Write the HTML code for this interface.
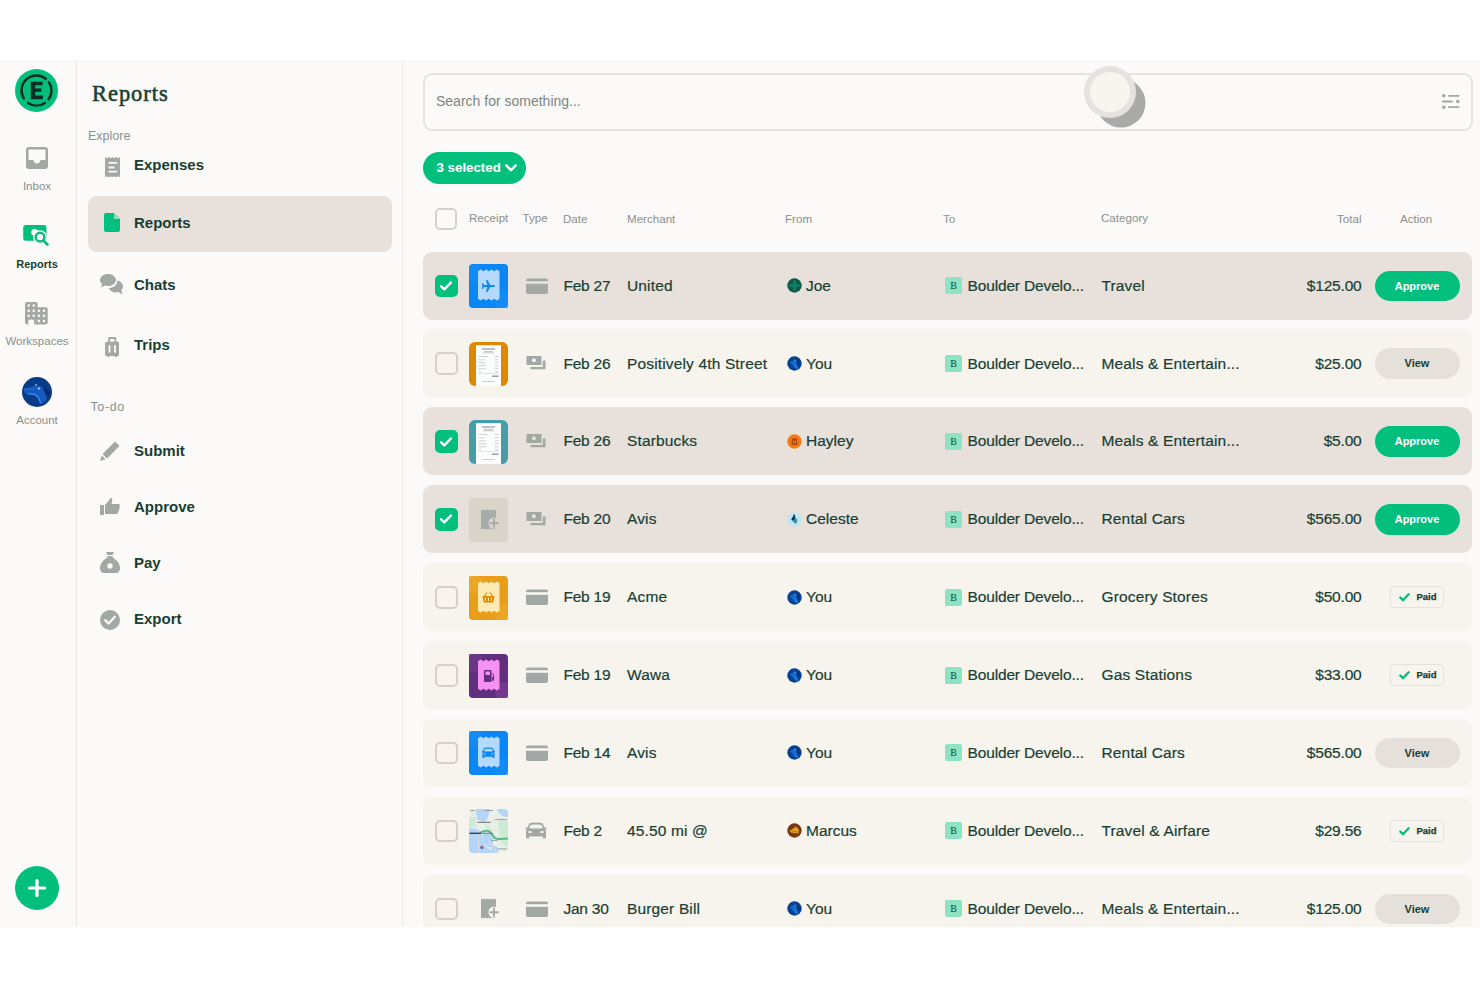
<!DOCTYPE html>
<html><head><meta charset="utf-8">
<style>
*{box-sizing:border-box;margin:0;padding:0}
html,body{width:1480px;height:987px;background:#FFFFFF;overflow:hidden;font-family:"Liberation Sans",sans-serif;color:#183F32}
#app{position:absolute;left:0;top:60px;width:1480px;height:867px;background:#FBFAF8;overflow:hidden}
.abs{position:absolute}
#nav{position:absolute;left:0;top:0;width:77px;height:867px;border-right:1px solid #E8E7E3}
.navlbl{position:absolute;width:74px;left:0;text-align:center;font-size:11.5px;color:#8A918D;white-space:nowrap}
#lhn{position:absolute;left:77px;top:0;width:326px;height:867px;border-right:1px solid #ECEBE8}
.title{position:absolute;left:15px;top:20.5px;font-family:"Liberation Serif",serif;font-size:22.5px;letter-spacing:0.95px;color:#183F32;-webkit-text-stroke:0.55px #183F32}
.sect{position:absolute;font-size:12.5px;color:#8A918D}
.item{position:absolute;left:57px;font-size:15px;font-weight:bold;color:#183F32;white-space:nowrap}
.ico{position:absolute}
.selbg{position:absolute;left:11px;top:135.5px;width:304px;height:56px;border-radius:9px;background:#E8E0DA}
#search{position:absolute;left:423px;top:13px;width:1049.5px;height:57.5px;border:2px solid #E8E3DC;border-radius:9px;background:#FBFAF8}
#search .ph{position:absolute;left:11px;top:18px;font-size:14px;color:#7C8581}
.pill{position:absolute;left:422.5px;top:92px;width:103.5px;height:31.5px;border-radius:16px;background:#03BF7D;color:#fff;font-weight:bold;font-size:13.3px}
.pill span{position:absolute;left:14px;top:7.5px}
.hdr{position:absolute;top:151px;font-size:11.6px;color:#8A918D;white-space:nowrap}
.cb{position:absolute;left:12px;top:23px;width:22.5px;height:22.5px;border:2px solid #D6D0C9;border-radius:5px}
.cb.on{background:#03BF7D;border-color:#03BF7D}
.cb svg{position:absolute;left:2.3px;top:3.3px}
.row{position:absolute;left:423px;width:1049px;height:68px;border-radius:9px}
.thumb{position:absolute;left:46px;top:12.5px;width:39px;height:44px}
.thumb svg{display:block}
.type{position:absolute;left:103px;top:26px}
.type.car{left:102px;top:25px}
.type svg{display:block}
.t{position:absolute;top:25.2px;font-size:15.5px;line-height:18px;white-space:nowrap;color:#183F32;-webkit-text-stroke:0.2px #183F32}
.merch,.cat{letter-spacing:0.15px}
.date{letter-spacing:-0.25px}
.date{left:140.5px}
.merch{left:204px}
.av{position:absolute;left:363.5px;top:26.5px}
.av svg{display:block}
.from{left:383px}
.ws{position:absolute;left:522px;top:25.5px}
.ws svg{display:block}
.to{left:544.5px;letter-spacing:-0.15px}
.cat{left:678.5px}
.total{right:110.5px;text-align:right;letter-spacing:-0.2px}
.btn{position:absolute;left:951.5px;top:19px;width:85px;height:30.5px;border-radius:16px;font-weight:bold;font-size:11px;text-align:center;line-height:30.5px}
.approve{background:#03BF7D;color:#fff}
.view{background:#E6E0DA;color:#183F32}
.paid{position:absolute;left:967px;top:23px;width:53.5px;height:22px;border:1px solid #E6E1DA;border-radius:4px;background:transparent;font-size:9.5px;font-weight:bold;color:#183F32;-webkit-text-stroke:0.25px #183F32}
.paid svg{position:absolute;left:8px;top:6px}
.paid span{position:absolute;left:25.5px;top:4px}
</style></head>
<body>
<div id="app">
  <div id="nav">
    <svg class="abs" style="left:15px;top:8.5px" width="43" height="43" viewBox="0 0 43 43">
      <circle cx="21.5" cy="21.5" r="21.5" fill="#03BF7D"/>
      <path d="M30.73 9.68 A15 15 0 0 0 8.78 29.45" stroke="#0A2E24" stroke-width="2.5" fill="none" stroke-linecap="round"/><path d="M33.64 30.32 A15 15 0 0 0 34.08 13.33" stroke="#0A2E24" stroke-width="2.5" fill="none" stroke-linecap="round"/><path d="M13.11 33.94 A15 15 0 0 0 29.89 33.94" stroke="#0A2E24" stroke-width="2.5" fill="none" stroke-linecap="round"/>
      <path d="M15.8 12.8 H27.6 V16.2 H20.2 V19.6 H26.4 V22.8 H20.2 V26.6 H27.9 V30.2 H15.8 Z" fill="#0A2E24"/>
    </svg>
    <svg class="abs" style="left:26px;top:87px" width="22" height="22" viewBox="0 0 22 22"><path d="M3 0 H19 A3 3 0 0 1 22 3 V19 A3 3 0 0 1 19 22 H3 A3 3 0 0 1 0 19 V3 A3 3 0 0 1 3 0 Z M2.5 2.5 V13 H7.6 A3.4 3.4 0 0 0 14.4 13 H19.5 V2.5 Z" fill="#A2A8A3" fill-rule="evenodd"/></svg>
    <div class="navlbl" style="top:119.5px">Inbox</div>
    <svg class="abs" style="left:23px;top:165px" width="26" height="21" viewBox="0 0 26 21"><rect x="0.2" y="0" width="23.3" height="15.7" rx="2.6" fill="#03BF7D"/><circle cx="17.05" cy="12.1" r="6.9" fill="#FBFAF8"/><circle cx="11.6" cy="7.4" r="3.3" fill="#FBFAF8"/><path d="M23.5 2 V15.7 H12 Z" fill="none"/><circle cx="17.05" cy="12.1" r="4.4" stroke="#03BF7D" stroke-width="2.4" fill="none"/><path d="M20.4 15.5 L24.4 19.5" stroke="#03BF7D" stroke-width="2.7" stroke-linecap="round"/></svg>
    <div class="navlbl" style="top:197.5px;font-weight:bold;color:#183F32;font-size:11px">Reports</div>
    <svg class="abs" style="left:25px;top:242px" width="23" height="23" viewBox="0 0 23 23"><rect x="0" y="0" width="12.6" height="22.6" rx="2" fill="#A2A8A3"/><rect x="10" y="5.2" width="12.7" height="17.4" rx="2" fill="#A2A8A3"/><path d="M3.3 23 V19.2 A1.8 1.8 0 0 1 5.1 17.4 H7.4 A1.8 1.8 0 0 1 9.2 19.2 V23 Z" fill="#FBFAF8"/><g fill="#FBFAF8"><circle cx="3.7" cy="3.5" r="1.25"/><circle cx="8.7" cy="3.5" r="1.25"/><circle cx="3.7" cy="8.7" r="1.25"/><circle cx="8.7" cy="8.7" r="1.25"/><circle cx="13.9" cy="8.7" r="1.25"/><circle cx="19" cy="8.7" r="1.25"/><circle cx="3.7" cy="13.8" r="1.25"/><circle cx="8.7" cy="13.8" r="1.25"/><circle cx="13.9" cy="13.8" r="1.25"/><circle cx="19" cy="13.8" r="1.25"/><circle cx="13.9" cy="19" r="1.25"/><circle cx="19" cy="19" r="1.25"/></g></svg>
    <div class="navlbl" style="top:275px">Workspaces</div>
    <svg class="abs" style="left:22px;top:316.5px" width="30" height="30" viewBox="0 0 30 30"><circle cx="15" cy="15" r="15" fill="#093C88"/><path d="M21 10.5 C24 11 27 14 28.5 18 C27 19 25 19 23 18 Z" fill="#062A66"/><path d="M1.9 12.3 C5 11 9 10 12.4 8.9 L14 7.2 L15.5 8.8 C17.5 9 19.5 9.8 20.9 10.9 C22.5 14 24 18 25 21.4 C23.5 24 21.5 26 19.3 27.1 C17.5 23 15 20 12 18.5 C9 17.5 6 17 3.5 16.5 C2.5 15 2 13.5 1.9 12.3 Z" fill="#1558BE"/><path d="M5.9 17 C9 16.8 12.5 17.2 14.5 18.2 C16.5 19.8 17.8 23 18.5 26.3" stroke="#3490F5" stroke-width="1.3" fill="none"/><path d="M1.9 12.3 C5 11.5 8 11.5 11 12.5" stroke="#2A70D6" stroke-width="1" fill="none"/><ellipse cx="17" cy="11.5" rx="1.4" ry="1.1" fill="#A9CDF6"/><circle cx="14" cy="7.8" r="0.9" fill="#8FBBF0"/><circle cx="11.5" cy="21.5" r="0.4" fill="#3A7FD8"/></svg>
    <div class="navlbl" style="top:353.5px">Account</div>
    <svg class="abs" style="left:15px;top:806px" width="44" height="44" viewBox="0 0 44 44"><circle cx="22" cy="22" r="22" fill="#03BF7D"/><path d="M22 14.5 V29.5 M14.5 22 H29.5" stroke="#fff" stroke-width="3.2" stroke-linecap="round"/></svg>
  </div>
  <div id="lhn">
    <div class="title">Reports</div>
    <div class="sect" style="left:11px;top:68.5px">Explore</div>
    <svg class="ico" style="left:27.6px;top:96.5px" width="15" height="20.5" viewBox="0 0 15 20.5"><path d="M0 0 L1.9 1.3 L3.75 0 L5.6 1.3 L7.5 0 L9.4 1.3 L11.25 0 L13.1 1.3 L15 0 V20.5 L13.1 19.2 L11.25 20.5 L9.4 19.2 L7.5 20.5 L5.6 19.2 L3.75 20.5 L1.9 19.2 L0 20.5 Z" fill="#A2A8A3"/><rect x="3.4" y="4.9" width="8.8" height="1.9" rx=".9" fill="#FBFAF8"/><rect x="3.4" y="9.5" width="6.2" height="1.9" rx=".9" fill="#FBFAF8"/><rect x="3.4" y="13.7" width="8.8" height="1.9" rx=".9" fill="#FBFAF8"/></svg>
    <div class="item" style="top:96px">Expenses</div>
    <div class="selbg"></div>
    <svg class="ico" style="left:26.5px;top:153px" width="16" height="19" viewBox="0 0 16 19"><path d="M2 0 H10 L16 6 V17 A2 2 0 0 1 14 19 H2 A2 2 0 0 1 0 17 V2 A2 2 0 0 1 2 0 Z" fill="#03BF7D"/><path d="M10 0 V6 H16" fill="#7FE5BB"/></svg>
    <div class="item" style="top:153.5px">Reports</div>
    <svg class="ico" style="left:22.5px;top:214px" width="23" height="21" viewBox="0 0 23 21"><path d="M8 0 C12.4 0 16 2.7 16 6 C16 9.3 12.4 12 8 12 C7 12 6 11.9 5.2 11.6 L1 13.5 L2.2 10 C0.8 9 0 7.6 0 6 C0 2.7 3.6 0 8 0 Z" fill="#A2A8A3"/><path d="M17.5 6.5 C20.6 7.3 23 9.6 23 12.3 C23 13.7 22.4 15 21.3 16 L22.5 20.5 L18.3 18.1 C17.6 18.3 16.8 18.4 16 18.4 C12.6 18.4 9.7 16.7 8.7 14.2 C13.4 14 17.3 11 17.5 6.5 Z" fill="#A2A8A3"/></svg>
    <div class="item" style="top:216px">Chats</div>
    <svg class="ico" style="left:27.5px;top:276.5px" width="14.5" height="20" viewBox="0 0 16 21" preserveAspectRatio="none"><path d="M5 0 H11 A1.5 1.5 0 0 1 12.5 1.5 V5 H14 A2 2 0 0 1 16 7 V18 A2 2 0 0 1 14 20 H13.5 V21 H11 V20 H5 V21 H2.5 V20 H2 A2 2 0 0 1 0 18 V7 A2 2 0 0 1 2 5 H3.5 V1.5 A1.5 1.5 0 0 1 5 0 Z M5.5 2 V5 H10.5 V2 Z" fill="#A2A8A3" fill-rule="evenodd"/><rect x="4" y="8.5" width="2" height="8" fill="#FBFAF8"/><rect x="10" y="8.5" width="2" height="8" fill="#FBFAF8"/></svg>
    <div class="item" style="top:276px">Trips</div>
    <div class="sect" style="left:13.5px;top:339.5px;letter-spacing:0.6px">To-do</div>
    <svg class="ico" style="left:23px;top:380.5px" width="20" height="20" viewBox="0 0 20 20"><path d="M15 0.5 L19.5 5 L7 17.5 L2.5 13 Z" fill="#A2A8A3"/><path d="M1.8 14.5 L5.5 18.2 L0 20 Z" fill="#A2A8A3"/></svg>
    <div class="item" style="top:382px">Submit</div>
    <svg class="ico" style="left:23px;top:437.5px" width="20" height="17" viewBox="0 0 20 17"><path d="M0 7 H4 V17 H0 Z" fill="#A2A8A3"/><path d="M5 7 L9 2.5 C9.5 1 10 0 11 0 C12.5 0 12.5 2 12 4 L11.5 6 H18.5 C19.5 6 20 6.8 20 7.5 C20 8.2 19.5 8.8 19 9 C19.6 9.3 19.8 9.8 19.7 10.4 C19.6 11 19.2 11.4 18.7 11.5 C19.1 11.9 19.2 12.4 19 12.9 C18.8 13.4 18.4 13.7 17.9 13.8 C18.1 14.2 18.1 14.7 17.8 15.1 C17.5 15.6 17 16 16.3 16 H5 Z" fill="#A2A8A3"/></svg>
    <div class="item" style="top:438px">Approve</div>
    <svg class="ico" style="left:23px;top:491.5px" width="20" height="21" viewBox="0 0 20 21"><path d="M6 0 H14 L12.5 3 H7.5 Z" fill="#A2A8A3"/><path d="M7.5 4 H12.5 L13 6 C17 8 20 12 20 16 C20 19 18.5 21 16 21 H4 C1.5 21 0 19 0 16 C0 12 3 8 7 6 Z" fill="#A2A8A3"/><circle cx="10" cy="14" r="2.7" fill="#FBFAF8"/></svg>
    <div class="item" style="top:494px">Pay</div>
    <svg class="ico" style="left:23px;top:549.5px" width="20" height="20" viewBox="0 0 20 20"><circle cx="10" cy="10" r="10" fill="#A2A8A3"/><path d="M5.3 10.3 L8.6 13.5 L14.8 6.8" stroke="#FBFAF8" stroke-width="2.4" fill="none" stroke-linecap="round" stroke-linejoin="round"/></svg>
    <div class="item" style="top:550px">Export</div>
  </div>
  <div id="search"><div class="ph">Search for something...</div>
    <svg class="abs" style="left:1017px;top:18.5px" width="18" height="15" viewBox="0 0 18 15"><circle cx="1.8" cy="1.8" r="1.8" fill="#A2A8A3"/><rect x="6" y="0.9" width="11.5" height="1.8" rx=".9" fill="#A2A8A3"/><rect x="0" y="6.6" width="11" height="1.8" rx=".9" fill="#A2A8A3"/><circle cx="15.8" cy="7.5" r="1.8" fill="#A2A8A3"/><circle cx="1.8" cy="13.2" r="1.8" fill="#A2A8A3"/><rect x="6" y="12.3" width="11.5" height="1.8" rx=".9" fill="#A2A8A3"/></svg>
  </div>
  <svg class="abs" style="left:1080px;top:0px" width="70" height="70" viewBox="0 0 70 70"><circle cx="41" cy="43" r="24.5" fill="#AAAAA8"/><circle cx="30" cy="32" r="26" fill="#E6E3DF"/><circle cx="30" cy="32" r="20" fill="#F8F5F1"/></svg>
  <div class="pill"><span>3 selected</span><svg class="abs" style="left:82px;top:12px" width="12" height="8" viewBox="0 0 12 8"><path d="M1.3 1.3 L6 6.2 L10.7 1.3" stroke="#fff" stroke-width="2.4" fill="none" stroke-linecap="round" stroke-linejoin="round"/></svg></div>
  <div class="cb" style="left:434.5px;top:147.5px"></div>
  <div class="hdr" style="left:469px">Receipt</div>
  <div class="hdr" style="left:522.5px">Type</div>
  <div class="hdr" style="left:563px;top:152px">Date</div>
  <div class="hdr" style="left:627px;top:152px">Merchant</div>
  <div class="hdr" style="left:785px;top:152px">From</div>
  <div class="hdr" style="left:943px;top:152px">To</div>
  <div class="hdr" style="left:1101px">Category</div>
  <div class="hdr" style="left:1337px;top:152px">Total</div>
  <div class="hdr" style="left:1400px;top:152px">Action</div>
  <div class="row" style="top:191.5px;background:#E8E0DA">
  <div class="cb on"><svg width="14" height="12" viewBox="0 0 14 12"><path d="M2 6.2 L5.3 9.3 L12 2.5" stroke="#fff" stroke-width="2.4" fill="none" stroke-linecap="round" stroke-linejoin="round"/></svg></div>
  <div class="thumb"><svg width="39" height="44" viewBox="0 0 39 44"><rect width="39" height="44" rx="4" fill="#0B86F5"/><circle cx="6" cy="10" r="9" fill="#1790F7" opacity=".6"/><circle cx="33" cy="36" r="10" fill="#1790F7" opacity=".6"/><path d="M9.00 7.30 L11.69 5.50 L14.38 7.30 L17.06 5.50 L19.75 7.30 L22.44 5.50 L25.12 7.30 L27.81 5.50 L30.50 7.30 L30.50 34.70 L27.81 36.50 L25.12 34.70 L22.44 36.50 L19.75 34.70 L17.06 36.50 L14.38 34.70 L11.69 36.50 L9.00 34.70 Z" fill="#B4D9FD"/><path d="M19.5 15.5 C20.3 15.5 20.6 16.4 20.6 17.5 V20.3 L25.5 23 V24.6 L20.6 23.1 V26.4 L22.2 27.6 V28.8 L19.5 28 L16.8 28.8 V27.6 L18.4 26.4 V23.1 L13.5 24.6 V23 L18.4 20.3 V17.5 C18.4 16.4 18.7 15.5 19.5 15.5 Z" fill="#0B86F5" transform="rotate(90 19.5 22)"/></svg></div>
  <div class="type"><svg width="22" height="16" viewBox="0 0 22 16"><rect x="0" y="0.5" width="22" height="15.5" rx="2" fill="#A2A8A3"/><rect x="0" y="3.2" width="22" height="2.6" fill="#E8E0DA"/></svg></div>
  <div class="t date">Feb 27</div>
  <div class="t merch">United</div>
  <div class="av"><svg width="15" height="15" viewBox="0 0 15 15"><circle cx="7.5" cy="7.5" r="7.2" fill="#0B5A46"/><path d="M7.5 2.5 V12.5 M2.5 7.5 H12.5" stroke="#188066" stroke-width="2.6"/></svg></div>
  <div class="t from">Joe</div>
  <div class="ws"><svg width="17" height="17" viewBox="0 0 17 17"><rect width="17" height="17" rx="2" fill="#8EE3C4"/><text x="8.5" y="12.3" font-family="Liberation Serif" font-size="10" text-anchor="middle" fill="#0B4A38">B</text></svg></div>
  <div class="t to">Boulder Develo...</div>
  <div class="t cat">Travel</div>
  <div class="t total">$125.00</div>
  <div class="btn approve">Approve</div>
</div><div class="row" style="top:269.4px;background:#F7F4EE">
  <div class="cb"></div>
  <div class="thumb"><svg width="39" height="44" viewBox="0 0 39 44"><rect width="39" height="44" rx="6" fill="#E08700"/><rect x="7" y="3.2" width="25" height="40.8" fill="#FBFCFC"/><rect x="13" y="6.5" width="13" height="1" fill="#7F868C"/><rect x="15" y="9" width="9" height="0.7" fill="#A9AFB3"/><rect x="14" y="10.5" width="11" height="0.7" fill="#A9AFB3"/><rect x="9.5" y="14" width="9" height="0.7" fill="#B8BEC2"/><rect x="9.5" y="17.5" width="6" height="0.7" fill="#B8BEC2"/><rect x="9.5" y="20.5" width="7" height="0.7" fill="#B8BEC2"/><rect x="9.5" y="23.5" width="8" height="0.7" fill="#B8BEC2"/><rect x="9.5" y="26.5" width="7.5" height="0.7" fill="#B8BEC2"/><rect x="9.5" y="29.5" width="3" height="0.7" fill="#B8BEC2"/><rect x="26" y="14" width="3.5" height="0.7" fill="#B8BEC2"/><rect x="26" y="17.5" width="3.5" height="0.7" fill="#B8BEC2"/><rect x="26" y="20.5" width="3.5" height="0.7" fill="#B8BEC2"/><rect x="26" y="23.5" width="3.5" height="0.7" fill="#B8BEC2"/><rect x="26" y="26.5" width="3.5" height="0.7" fill="#B8BEC2"/><rect x="26" y="29.5" width="3.5" height="0.7" fill="#B8BEC2"/><rect x="9.5" y="31.3" width="20" height="0.6" fill="#D0D4D6"/><rect x="23" y="33.5" width="6.5" height="1.4" fill="#8D9398"/><rect x="13" y="39" width="13" height="0.7" fill="#B8BEC2"/></svg></div>
  <div class="type"><svg width="21" height="15" viewBox="0 0 21 15" style="margin-top:1px"><rect x="0.5" y="0" width="15" height="9" fill="#A2A8A3"/><circle cx="7.9" cy="4.3" r="2" fill="#F7F4EE"/><path d="M16.8 4.5 H19.5 V13.2 H4.5 V11 H16.8 Z" fill="#A2A8A3"/></svg></div>
  <div class="t date">Feb 26</div>
  <div class="t merch">Positively 4th Street</div>
  <div class="av"><svg width="15" height="15" viewBox="0 0 15 15"><circle cx="7.5" cy="7.5" r="7.2" fill="#08418F"/><path d="M2.5 6 C5 5.5 6.5 4.5 7.5 3 L9 4.5 L10 9 L11.5 12 C9.5 13.5 7 12 6 10 C5 8 3.5 7 2.5 6 Z" fill="#1467D0"/><path d="M7.5 7 L9.5 11 L11 12.5 C10 13 9 12.5 8.5 11.5 Z" fill="#2C86F0"/><circle cx="8.2" cy="4.8" r="0.8" fill="#5C9CE8"/><path d="M12 4 C11 6 11.5 8 13 9" stroke="#072E6B" stroke-width="1.2" fill="none"/></svg></div>
  <div class="t from">You</div>
  <div class="ws"><svg width="17" height="17" viewBox="0 0 17 17"><rect width="17" height="17" rx="2" fill="#8EE3C4"/><text x="8.5" y="12.3" font-family="Liberation Serif" font-size="10" text-anchor="middle" fill="#0B4A38">B</text></svg></div>
  <div class="t to">Boulder Develo...</div>
  <div class="t cat">Meals &amp; Entertain...</div>
  <div class="t total">$25.00</div>
  <div class="btn view">View</div>
</div><div class="row" style="top:347.3px;background:#E8E0DA">
  <div class="cb on"><svg width="14" height="12" viewBox="0 0 14 12"><path d="M2 6.2 L5.3 9.3 L12 2.5" stroke="#fff" stroke-width="2.4" fill="none" stroke-linecap="round" stroke-linejoin="round"/></svg></div>
  <div class="thumb"><svg width="39" height="44" viewBox="0 0 39 44"><rect width="39" height="44" rx="6" fill="#449DA8"/><rect x="7" y="3.2" width="25" height="40.8" fill="#FBFCFC"/><rect x="13" y="6.5" width="13" height="1" fill="#7F868C"/><rect x="15" y="9" width="9" height="0.7" fill="#A9AFB3"/><rect x="14" y="10.5" width="11" height="0.7" fill="#A9AFB3"/><rect x="9.5" y="14" width="9" height="0.7" fill="#B8BEC2"/><rect x="9.5" y="17.5" width="6" height="0.7" fill="#B8BEC2"/><rect x="9.5" y="20.5" width="7" height="0.7" fill="#B8BEC2"/><rect x="9.5" y="23.5" width="8" height="0.7" fill="#B8BEC2"/><rect x="9.5" y="26.5" width="7.5" height="0.7" fill="#B8BEC2"/><rect x="9.5" y="29.5" width="3" height="0.7" fill="#B8BEC2"/><rect x="26" y="14" width="3.5" height="0.7" fill="#B8BEC2"/><rect x="26" y="17.5" width="3.5" height="0.7" fill="#B8BEC2"/><rect x="26" y="20.5" width="3.5" height="0.7" fill="#B8BEC2"/><rect x="26" y="23.5" width="3.5" height="0.7" fill="#B8BEC2"/><rect x="26" y="26.5" width="3.5" height="0.7" fill="#B8BEC2"/><rect x="26" y="29.5" width="3.5" height="0.7" fill="#B8BEC2"/><rect x="9.5" y="31.3" width="20" height="0.6" fill="#D0D4D6"/><rect x="23" y="33.5" width="6.5" height="1.4" fill="#8D9398"/><rect x="13" y="39" width="13" height="0.7" fill="#B8BEC2"/></svg></div>
  <div class="type"><svg width="21" height="15" viewBox="0 0 21 15" style="margin-top:1px"><rect x="0.5" y="0" width="15" height="9" fill="#A2A8A3"/><circle cx="7.9" cy="4.3" r="2" fill="#E8E0DA"/><path d="M16.8 4.5 H19.5 V13.2 H4.5 V11 H16.8 Z" fill="#A2A8A3"/></svg></div>
  <div class="t date">Feb 26</div>
  <div class="t merch">Starbucks</div>
  <div class="av"><svg width="15" height="15" viewBox="0 0 15 15"><circle cx="7.5" cy="7.5" r="7.2" fill="#F37A12"/><path d="M5 5 C5 4 10 4 10 5 L10.5 10.5 C9 11.5 6 11.5 4.5 10.5 Z" fill="#A8480C"/><rect x="6" y="6.5" width="1.2" height="3" fill="#E07840"/><rect x="8" y="6.5" width="1.2" height="3" fill="#E07840"/></svg></div>
  <div class="t from">Hayley</div>
  <div class="ws"><svg width="17" height="17" viewBox="0 0 17 17"><rect width="17" height="17" rx="2" fill="#8EE3C4"/><text x="8.5" y="12.3" font-family="Liberation Serif" font-size="10" text-anchor="middle" fill="#0B4A38">B</text></svg></div>
  <div class="t to">Boulder Develo...</div>
  <div class="t cat">Meals &amp; Entertain...</div>
  <div class="t total">$5.00</div>
  <div class="btn approve">Approve</div>
</div><div class="row" style="top:425.2px;background:#E8E0DA">
  <div class="cb on"><svg width="14" height="12" viewBox="0 0 14 12"><path d="M2 6.2 L5.3 9.3 L12 2.5" stroke="#fff" stroke-width="2.4" fill="none" stroke-linecap="round" stroke-linejoin="round"/></svg></div>
  <div class="thumb"><svg width="39" height="44" viewBox="0 0 39 44"><rect width="39" height="44" rx="4" fill="#DBD4CB"/><path d="M12.00 11.50 L13.50 12.50 L15.00 11.50 L16.50 12.50 L18.00 11.50 L19.50 12.50 L21.00 11.50 L22.50 12.50 L24.00 11.50 L25.50 12.50 L27.00 11.50 L27.00 31.50 L25.50 30.50 L24.00 31.50 L22.50 30.50 L21.00 31.50 L19.50 30.50 L18.00 31.50 L16.50 30.50 L15.00 31.50 L13.50 30.50 L12.00 31.50 Z" fill="#A6ACA6"/><circle cx="25" cy="25.2" r="5.6" fill="#DBD4CB"/><path d="M25 20.6 V29.799999999999997 M20.4 25.2 H29.6" stroke="#A6ACA6" stroke-width="1.9"/></svg></div>
  <div class="type"><svg width="21" height="15" viewBox="0 0 21 15" style="margin-top:1px"><rect x="0.5" y="0" width="15" height="9" fill="#A2A8A3"/><circle cx="7.9" cy="4.3" r="2" fill="#E8E0DA"/><path d="M16.8 4.5 H19.5 V13.2 H4.5 V11 H16.8 Z" fill="#A2A8A3"/></svg></div>
  <div class="t date">Feb 20</div>
  <div class="t merch">Avis</div>
  <div class="av"><svg width="15" height="15" viewBox="0 0 15 15"><circle cx="7.5" cy="7.5" r="7.2" fill="#BFE6F4"/><path d="M6.5 2.5 C8 2.5 8.5 4 8 5 L10.5 8 L9 12 L7 10.5 L4.5 8 C4.5 6 5.5 5 6.5 4.5 Z" fill="#3C8C9C"/><path d="M6.5 2.5 C8 2.5 8.5 4 8 5 L7 8 L4.5 8 C4.5 6 5.5 5 6.5 4.5 Z" fill="#0A2F4C"/></svg></div>
  <div class="t from">Celeste</div>
  <div class="ws"><svg width="17" height="17" viewBox="0 0 17 17"><rect width="17" height="17" rx="2" fill="#8EE3C4"/><text x="8.5" y="12.3" font-family="Liberation Serif" font-size="10" text-anchor="middle" fill="#0B4A38">B</text></svg></div>
  <div class="t to">Boulder Develo...</div>
  <div class="t cat">Rental Cars</div>
  <div class="t total">$565.00</div>
  <div class="btn approve">Approve</div>
</div><div class="row" style="top:503.1px;background:#F7F4EE">
  <div class="cb"></div>
  <div class="thumb"><svg width="39" height="44" viewBox="0 0 39 44"><rect width="39" height="44" rx="4" fill="#E89E1A"/><circle cx="4" cy="8" r="10" fill="#EFAA2A" opacity=".7"/><circle cx="36" cy="38" r="10" fill="#EFAA2A" opacity=".7"/><path d="M9.00 7.30 L11.69 5.50 L14.38 7.30 L17.06 5.50 L19.75 7.30 L22.44 5.50 L25.12 7.30 L27.81 5.50 L30.50 7.30 L30.50 34.70 L27.81 36.50 L25.12 34.70 L22.44 36.50 L19.75 34.70 L17.06 36.50 L14.38 34.70 L11.69 36.50 L9.00 34.70 Z" fill="#FCE9B4"/><path d="M13.5 20 H25.5 L24.3 26.5 H14.7 Z" fill="#E08A00"/><path d="M15.5 20 L18 16.5 M23.5 20 L21 16.5" stroke="#E08A00" stroke-width="1.2"/><rect x="16" y="21.5" width="1" height="3.5" fill="#FCE9B4"/><rect x="19" y="21.5" width="1" height="3.5" fill="#FCE9B4"/><rect x="22" y="21.5" width="1" height="3.5" fill="#FCE9B4"/></svg></div>
  <div class="type"><svg width="22" height="16" viewBox="0 0 22 16"><rect x="0" y="0.5" width="22" height="15.5" rx="2" fill="#A2A8A3"/><rect x="0" y="3.2" width="22" height="2.6" fill="#F7F4EE"/></svg></div>
  <div class="t date">Feb 19</div>
  <div class="t merch">Acme</div>
  <div class="av"><svg width="15" height="15" viewBox="0 0 15 15"><circle cx="7.5" cy="7.5" r="7.2" fill="#08418F"/><path d="M2.5 6 C5 5.5 6.5 4.5 7.5 3 L9 4.5 L10 9 L11.5 12 C9.5 13.5 7 12 6 10 C5 8 3.5 7 2.5 6 Z" fill="#1467D0"/><path d="M7.5 7 L9.5 11 L11 12.5 C10 13 9 12.5 8.5 11.5 Z" fill="#2C86F0"/><circle cx="8.2" cy="4.8" r="0.8" fill="#5C9CE8"/><path d="M12 4 C11 6 11.5 8 13 9" stroke="#072E6B" stroke-width="1.2" fill="none"/></svg></div>
  <div class="t from">You</div>
  <div class="ws"><svg width="17" height="17" viewBox="0 0 17 17"><rect width="17" height="17" rx="2" fill="#8EE3C4"/><text x="8.5" y="12.3" font-family="Liberation Serif" font-size="10" text-anchor="middle" fill="#0B4A38">B</text></svg></div>
  <div class="t to">Boulder Develo...</div>
  <div class="t cat">Grocery Stores</div>
  <div class="t total">$50.00</div>
  <div class="paid"><svg width="11" height="9" viewBox="0 0 11 9"><path d="M1.3 4.5 L4 7.3 L9.6 1.3" stroke="#03BF7D" stroke-width="2.3" fill="none" stroke-linecap="round" stroke-linejoin="round"/></svg><span>Paid</span></div>
</div><div class="row" style="top:581.0px;background:#F7F4EE">
  <div class="cb"></div>
  <div class="thumb"><svg width="39" height="44" viewBox="0 0 39 44"><rect width="39" height="44" rx="4" fill="#622F7E"/><circle cx="4" cy="8" r="10" fill="#70398C" opacity=".7"/><circle cx="36" cy="38" r="10" fill="#7A3D96" opacity=".7"/><path d="M9.00 7.30 L11.69 5.50 L14.38 7.30 L17.06 5.50 L19.75 7.30 L22.44 5.50 L25.12 7.30 L27.81 5.50 L30.50 7.30 L30.50 34.70 L27.81 36.50 L25.12 34.70 L22.44 36.50 L19.75 34.70 L17.06 36.50 L14.38 34.70 L11.69 36.50 L9.00 34.70 Z" fill="#F691F2"/><rect x="15" y="16" width="7.5" height="12" rx="1" fill="#622F7E"/><rect x="16.5" y="17.5" width="4.5" height="3.5" fill="#F691F2"/><path d="M22.5 19 L24.5 21 V26 C24.5 27 23.5 27 23.5 26 V23.5 H22.5" stroke="#622F7E" stroke-width="1" fill="none"/></svg></div>
  <div class="type"><svg width="22" height="16" viewBox="0 0 22 16"><rect x="0" y="0.5" width="22" height="15.5" rx="2" fill="#A2A8A3"/><rect x="0" y="3.2" width="22" height="2.6" fill="#F7F4EE"/></svg></div>
  <div class="t date">Feb 19</div>
  <div class="t merch">Wawa</div>
  <div class="av"><svg width="15" height="15" viewBox="0 0 15 15"><circle cx="7.5" cy="7.5" r="7.2" fill="#08418F"/><path d="M2.5 6 C5 5.5 6.5 4.5 7.5 3 L9 4.5 L10 9 L11.5 12 C9.5 13.5 7 12 6 10 C5 8 3.5 7 2.5 6 Z" fill="#1467D0"/><path d="M7.5 7 L9.5 11 L11 12.5 C10 13 9 12.5 8.5 11.5 Z" fill="#2C86F0"/><circle cx="8.2" cy="4.8" r="0.8" fill="#5C9CE8"/><path d="M12 4 C11 6 11.5 8 13 9" stroke="#072E6B" stroke-width="1.2" fill="none"/></svg></div>
  <div class="t from">You</div>
  <div class="ws"><svg width="17" height="17" viewBox="0 0 17 17"><rect width="17" height="17" rx="2" fill="#8EE3C4"/><text x="8.5" y="12.3" font-family="Liberation Serif" font-size="10" text-anchor="middle" fill="#0B4A38">B</text></svg></div>
  <div class="t to">Boulder Develo...</div>
  <div class="t cat">Gas Stations</div>
  <div class="t total">$33.00</div>
  <div class="paid"><svg width="11" height="9" viewBox="0 0 11 9"><path d="M1.3 4.5 L4 7.3 L9.6 1.3" stroke="#03BF7D" stroke-width="2.3" fill="none" stroke-linecap="round" stroke-linejoin="round"/></svg><span>Paid</span></div>
</div><div class="row" style="top:658.9px;background:#F7F4EE">
  <div class="cb"></div>
  <div class="thumb"><svg width="39" height="44" viewBox="0 0 39 44"><rect width="39" height="44" rx="4" fill="#0B86F5"/><circle cx="4" cy="8" r="10" fill="#1790F7" opacity=".6"/><circle cx="36" cy="38" r="10" fill="#1790F7" opacity=".6"/><path d="M9.00 7.30 L11.69 5.50 L14.38 7.30 L17.06 5.50 L19.75 7.30 L22.44 5.50 L25.12 7.30 L27.81 5.50 L30.50 7.30 L30.50 34.70 L27.81 36.50 L25.12 34.70 L22.44 36.50 L19.75 34.70 L17.06 36.50 L14.38 34.70 L11.69 36.50 L9.00 34.70 Z" fill="#B4D9FD"/><path d="M15.2 17 C16 16.2 23 16.2 23.8 17 L25 19.8 H26 V20.8 L25.3 21 L25.6 23.5 V27 H23.6 V25.8 H15.4 V27 H13.4 V23.5 L13.7 21 L13 20.8 V19.8 H14 Z" fill="#0B86F5"/><path d="M16 18 C17 17.5 22 17.5 23 18 L24 20.2 C21 20.7 18 20.7 15 20.2 Z" fill="#B4D9FD"/><ellipse cx="15.8" cy="22.8" rx="1.1" ry="0.6" fill="#B4D9FD"/><ellipse cx="23.2" cy="22.8" rx="1.1" ry="0.6" fill="#B4D9FD"/></svg></div>
  <div class="type"><svg width="22" height="16" viewBox="0 0 22 16"><rect x="0" y="0.5" width="22" height="15.5" rx="2" fill="#A2A8A3"/><rect x="0" y="3.2" width="22" height="2.6" fill="#F7F4EE"/></svg></div>
  <div class="t date">Feb 14</div>
  <div class="t merch">Avis</div>
  <div class="av"><svg width="15" height="15" viewBox="0 0 15 15"><circle cx="7.5" cy="7.5" r="7.2" fill="#08418F"/><path d="M2.5 6 C5 5.5 6.5 4.5 7.5 3 L9 4.5 L10 9 L11.5 12 C9.5 13.5 7 12 6 10 C5 8 3.5 7 2.5 6 Z" fill="#1467D0"/><path d="M7.5 7 L9.5 11 L11 12.5 C10 13 9 12.5 8.5 11.5 Z" fill="#2C86F0"/><circle cx="8.2" cy="4.8" r="0.8" fill="#5C9CE8"/><path d="M12 4 C11 6 11.5 8 13 9" stroke="#072E6B" stroke-width="1.2" fill="none"/></svg></div>
  <div class="t from">You</div>
  <div class="ws"><svg width="17" height="17" viewBox="0 0 17 17"><rect width="17" height="17" rx="2" fill="#8EE3C4"/><text x="8.5" y="12.3" font-family="Liberation Serif" font-size="10" text-anchor="middle" fill="#0B4A38">B</text></svg></div>
  <div class="t to">Boulder Develo...</div>
  <div class="t cat">Rental Cars</div>
  <div class="t total">$565.00</div>
  <div class="btn view">View</div>
</div><div class="row" style="top:736.8px;background:#F7F4EE">
  <div class="cb"></div>
  <div class="thumb"><svg width="39" height="44" viewBox="0 0 39 44"><defs><clipPath id="mc"><rect width="39" height="44" rx="4"/></clipPath></defs><g clip-path="url(#mc)"><rect width="39" height="44" fill="#E6F1E8"/><path d="M0 8 H7.5 L6 18 H0 Z" fill="#CBEBD6"/><path d="M29 12 C33 11 37 12 39 13 V38 C36 37 33 35 31 30 C30 24 29.5 18 29 12 Z" fill="#CBEBD6"/><path d="M15 14 C18 15 22 18 24 21 C22 22 19 21 16 20 Z" fill="#D3EEDC"/><path d="M7 0 H21 C20 5 19 9 17 11.5 C15 13 11 12.5 9 11 C7.5 8 7 4 7 0 Z" fill="#B3D6F8"/><path d="M28 0 H39 V8 C35 8.5 30 6 28 0 Z" fill="#B3D6F8"/><path d="M0 19.5 C3 19 8 19.5 12.5 22 C13 28 14 34 18 38 C21 41 25 42 28 44 H0 Z" fill="#B3D6F8"/><path d="M13 23.5 C17 23 21 24 23.5 27 C24.5 31 24 36 22.5 39 C19 38 16 36 14.5 33 Z" fill="#B3D6F8"/><path d="M23 37 C25 36 27 37 29 39 V44 H22 Z" fill="#B3D6F8"/><path d="M3 2 L7 14 L9 22 L10 44 M9 11 L20 14 L30 9 L39 10 M20 22 L39 20 M18 30 L28 44 M24 25 L33 36" stroke="#F3D9D2" stroke-width="0.8" fill="none"/><path d="M12.8 23 C15 22 17.5 21.3 19.5 22 C22 23 23.5 26.5 25.5 28.8 C28 30.5 32 30.2 39 29.5" stroke="#5BB97F" stroke-width="2.1" fill="none" stroke-linecap="round"/><rect x="1" y="1" width="5" height="0.8" fill="#8A8F94"/><rect x="16" y="1" width="8" height="0.8" fill="#8A8F94"/><rect x="8.5" y="12.8" width="13" height="0.9" fill="#5B6066"/><rect x="26" y="10.3" width="12" height="0.8" fill="#8A8F94"/><rect x="0.5" y="23.6" width="12" height="1.4" fill="#3D4247"/><rect x="14" y="23.8" width="10" height="0.9" fill="#6B7075"/><rect x="28.5" y="39.5" width="9.5" height="0.8" fill="#8A8F94"/><rect x="22" y="31" width="7" height="0.7" fill="#8A8F94"/><circle cx="12.8" cy="38.5" r="1.6" fill="#5461C9"/><circle cx="12.8" cy="37.6" r="1" fill="#E25546"/></g></svg></div>
  <div class="type car"><svg width="22" height="17" viewBox="0 0 22 17"><path d="M4.5 1.2 C6 0.3 16 0.3 17.5 1.2 L19.5 5.5 L21.5 5.5 L21.5 7 L20.5 7.2 L21 11 L21 16.5 L18 16.5 L18 14.5 L4 14.5 L4 16.5 L1 16.5 L1 11 L1.5 7.2 L0.5 7 L0.5 5.5 L2.5 5.5 Z" fill="#A2A8A3"/><path d="M5.5 3 C7 2.3 15 2.3 16.5 3 L18 6 C14 6.8 8 6.8 4 6 Z" fill="#F7F4EE"/><ellipse cx="5" cy="10" rx="2" ry="1" fill="#F7F4EE"/><ellipse cx="17" cy="10" rx="2" ry="1" fill="#F7F4EE"/></svg></div>
  <div class="t date">Feb 2</div>
  <div class="t merch">45.50 mi @</div>
  <div class="av"><svg width="15" height="15" viewBox="0 0 15 15"><circle cx="7.5" cy="7.5" r="7.2" fill="#7A3810"/><path d="M2.5 7.5 L5 6.5 L9 3.5 L12 7 L11.5 10.5 L7 10 L4 9.5 Z" fill="#E0A21C"/><path d="M4 8 L8 8.5 L11 9" stroke="#B87812" stroke-width="0.8"/></svg></div>
  <div class="t from">Marcus</div>
  <div class="ws"><svg width="17" height="17" viewBox="0 0 17 17"><rect width="17" height="17" rx="2" fill="#8EE3C4"/><text x="8.5" y="12.3" font-family="Liberation Serif" font-size="10" text-anchor="middle" fill="#0B4A38">B</text></svg></div>
  <div class="t to">Boulder Develo...</div>
  <div class="t cat">Travel &amp; Airfare</div>
  <div class="t total">$29.56</div>
  <div class="paid"><svg width="11" height="9" viewBox="0 0 11 9"><path d="M1.3 4.5 L4 7.3 L9.6 1.3" stroke="#03BF7D" stroke-width="2.3" fill="none" stroke-linecap="round" stroke-linejoin="round"/></svg><span>Paid</span></div>
</div><div class="row" style="top:814.7px;background:#F7F4EE">
  <div class="cb"></div>
  <div class="thumb"><svg width="39" height="44" viewBox="0 0 39 44"><path d="M12.00 11.50 L13.50 12.50 L15.00 11.50 L16.50 12.50 L18.00 11.50 L19.50 12.50 L21.00 11.50 L22.50 12.50 L24.00 11.50 L25.50 12.50 L27.00 11.50 L27.00 31.50 L25.50 30.50 L24.00 31.50 L22.50 30.50 L21.00 31.50 L19.50 30.50 L18.00 31.50 L16.50 30.50 L15.00 31.50 L13.50 30.50 L12.00 31.50 Z" fill="#A2A8A3"/><circle cx="25" cy="25.2" r="5.6" fill="#F7F4EE"/><path d="M25 20.6 V29.799999999999997 M20.4 25.2 H29.6" stroke="#A2A8A3" stroke-width="1.9"/></svg></div>
  <div class="type"><svg width="22" height="16" viewBox="0 0 22 16"><rect x="0" y="0.5" width="22" height="15.5" rx="2" fill="#A2A8A3"/><rect x="0" y="3.2" width="22" height="2.6" fill="#F7F4EE"/></svg></div>
  <div class="t date">Jan 30</div>
  <div class="t merch">Burger Bill</div>
  <div class="av"><svg width="15" height="15" viewBox="0 0 15 15"><circle cx="7.5" cy="7.5" r="7.2" fill="#08418F"/><path d="M2.5 6 C5 5.5 6.5 4.5 7.5 3 L9 4.5 L10 9 L11.5 12 C9.5 13.5 7 12 6 10 C5 8 3.5 7 2.5 6 Z" fill="#1467D0"/><path d="M7.5 7 L9.5 11 L11 12.5 C10 13 9 12.5 8.5 11.5 Z" fill="#2C86F0"/><circle cx="8.2" cy="4.8" r="0.8" fill="#5C9CE8"/><path d="M12 4 C11 6 11.5 8 13 9" stroke="#072E6B" stroke-width="1.2" fill="none"/></svg></div>
  <div class="t from">You</div>
  <div class="ws"><svg width="17" height="17" viewBox="0 0 17 17"><rect width="17" height="17" rx="2" fill="#8EE3C4"/><text x="8.5" y="12.3" font-family="Liberation Serif" font-size="10" text-anchor="middle" fill="#0B4A38">B</text></svg></div>
  <div class="t to">Boulder Develo...</div>
  <div class="t cat">Meals &amp; Entertain...</div>
  <div class="t total">$125.00</div>
  <div class="btn view">View</div>
</div>
</div>
</body></html>
